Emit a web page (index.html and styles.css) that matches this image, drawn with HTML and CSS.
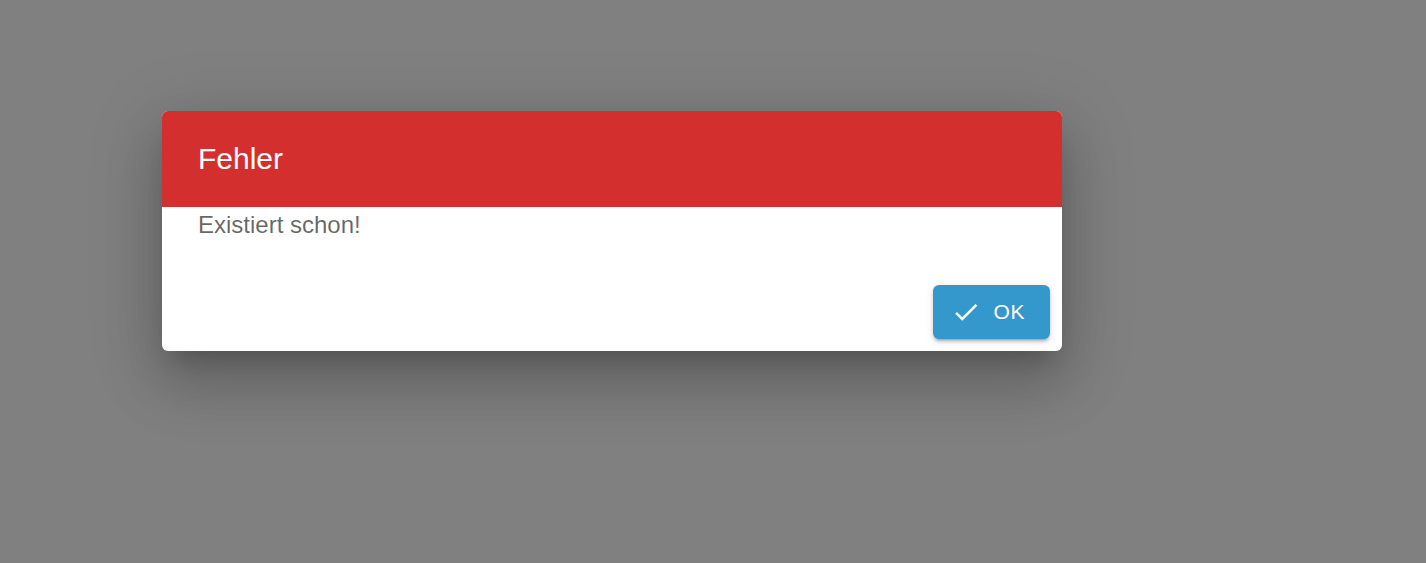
FILE: index.html
```html
<!DOCTYPE html>
<html lang="de">
<head>
<meta charset="utf-8">
<title>Fehler</title>
<link rel="stylesheet" href="styles.css">
</head>
<body>
<div class="backdrop">
  <div class="dialog" role="dialog">
    <div class="dialog-title"><h2>Fehler</h2></div>
    <div class="dialog-content"><p>Existiert schon!</p></div>
    <div class="dialog-actions">
      <button class="btn-ok" type="button">
        <span class="btn-icon"><svg viewBox="0 0 24 24" width="30" height="30"><path fill="#fff" d="M9 16.17 4.83 12l-1.42 1.41L9 19 21 7l-1.41-1.41z"/></svg></span>
        <span class="btn-label">OK</span>
      </button>
    </div>
  </div>
</div>
</body>
</html>
```
FILE: styles.css
```css
html, body {
  margin: 0;
  padding: 0;
  height: 100%;
}
body {
  background: #808080;
  font-family: "Liberation Sans", Arial, sans-serif;
  overflow: hidden;
}
.backdrop {
  padding: 111px 0 0 162px;
  display: flex;
  align-items: flex-start;
}
.dialog {
  width: 900px;
  background: #fff;
  border-radius: 6px;
  overflow: hidden;
  box-shadow: 0 16px 22px -10px rgba(0,0,0,0.2), 0 36px 57px 4px rgba(0,0,0,0.14), 0 14px 69px 12px rgba(0,0,0,0.12);
}
.dialog-title {
  background: #d32f2f;
  padding: 24px 36px;
}
.dialog-title h2 {
  margin: 0;
  font-size: 30px;
  font-weight: 400;
  line-height: 48px;
  color: #fff;
}
.dialog-content {
  padding: 0 36px 30px;
}
.dialog-content p {
  margin: 0;
  font-size: 24px;
  line-height: 36px;
  color: rgba(0,0,0,0.6);
}
.dialog-actions {
  display: flex;
  justify-content: flex-end;
  padding: 12px;
}
.btn-ok {
  display: inline-flex;
  align-items: center;
  border: 0;
  margin: 0;
  padding: 9px 25px 9px 24px;
  background: #3598cd;
  color: #fff;
  border-radius: 6px;
  font-family: "Liberation Sans", Arial, sans-serif;
  font-size: 21px;
  line-height: 36px;
  letter-spacing: 0.6px;
  box-shadow: 0 4px 2px -3px rgba(0,0,0,0.2), 0 3px 3px 0 rgba(0,0,0,0.14), 0 2px 8px 0 rgba(0,0,0,0.12);
  cursor: pointer;
}
.btn-icon {
  display: inline-flex;
  margin: 0 12px 0 -6px;
}
.btn-icon svg {
  display: block;
}
```
